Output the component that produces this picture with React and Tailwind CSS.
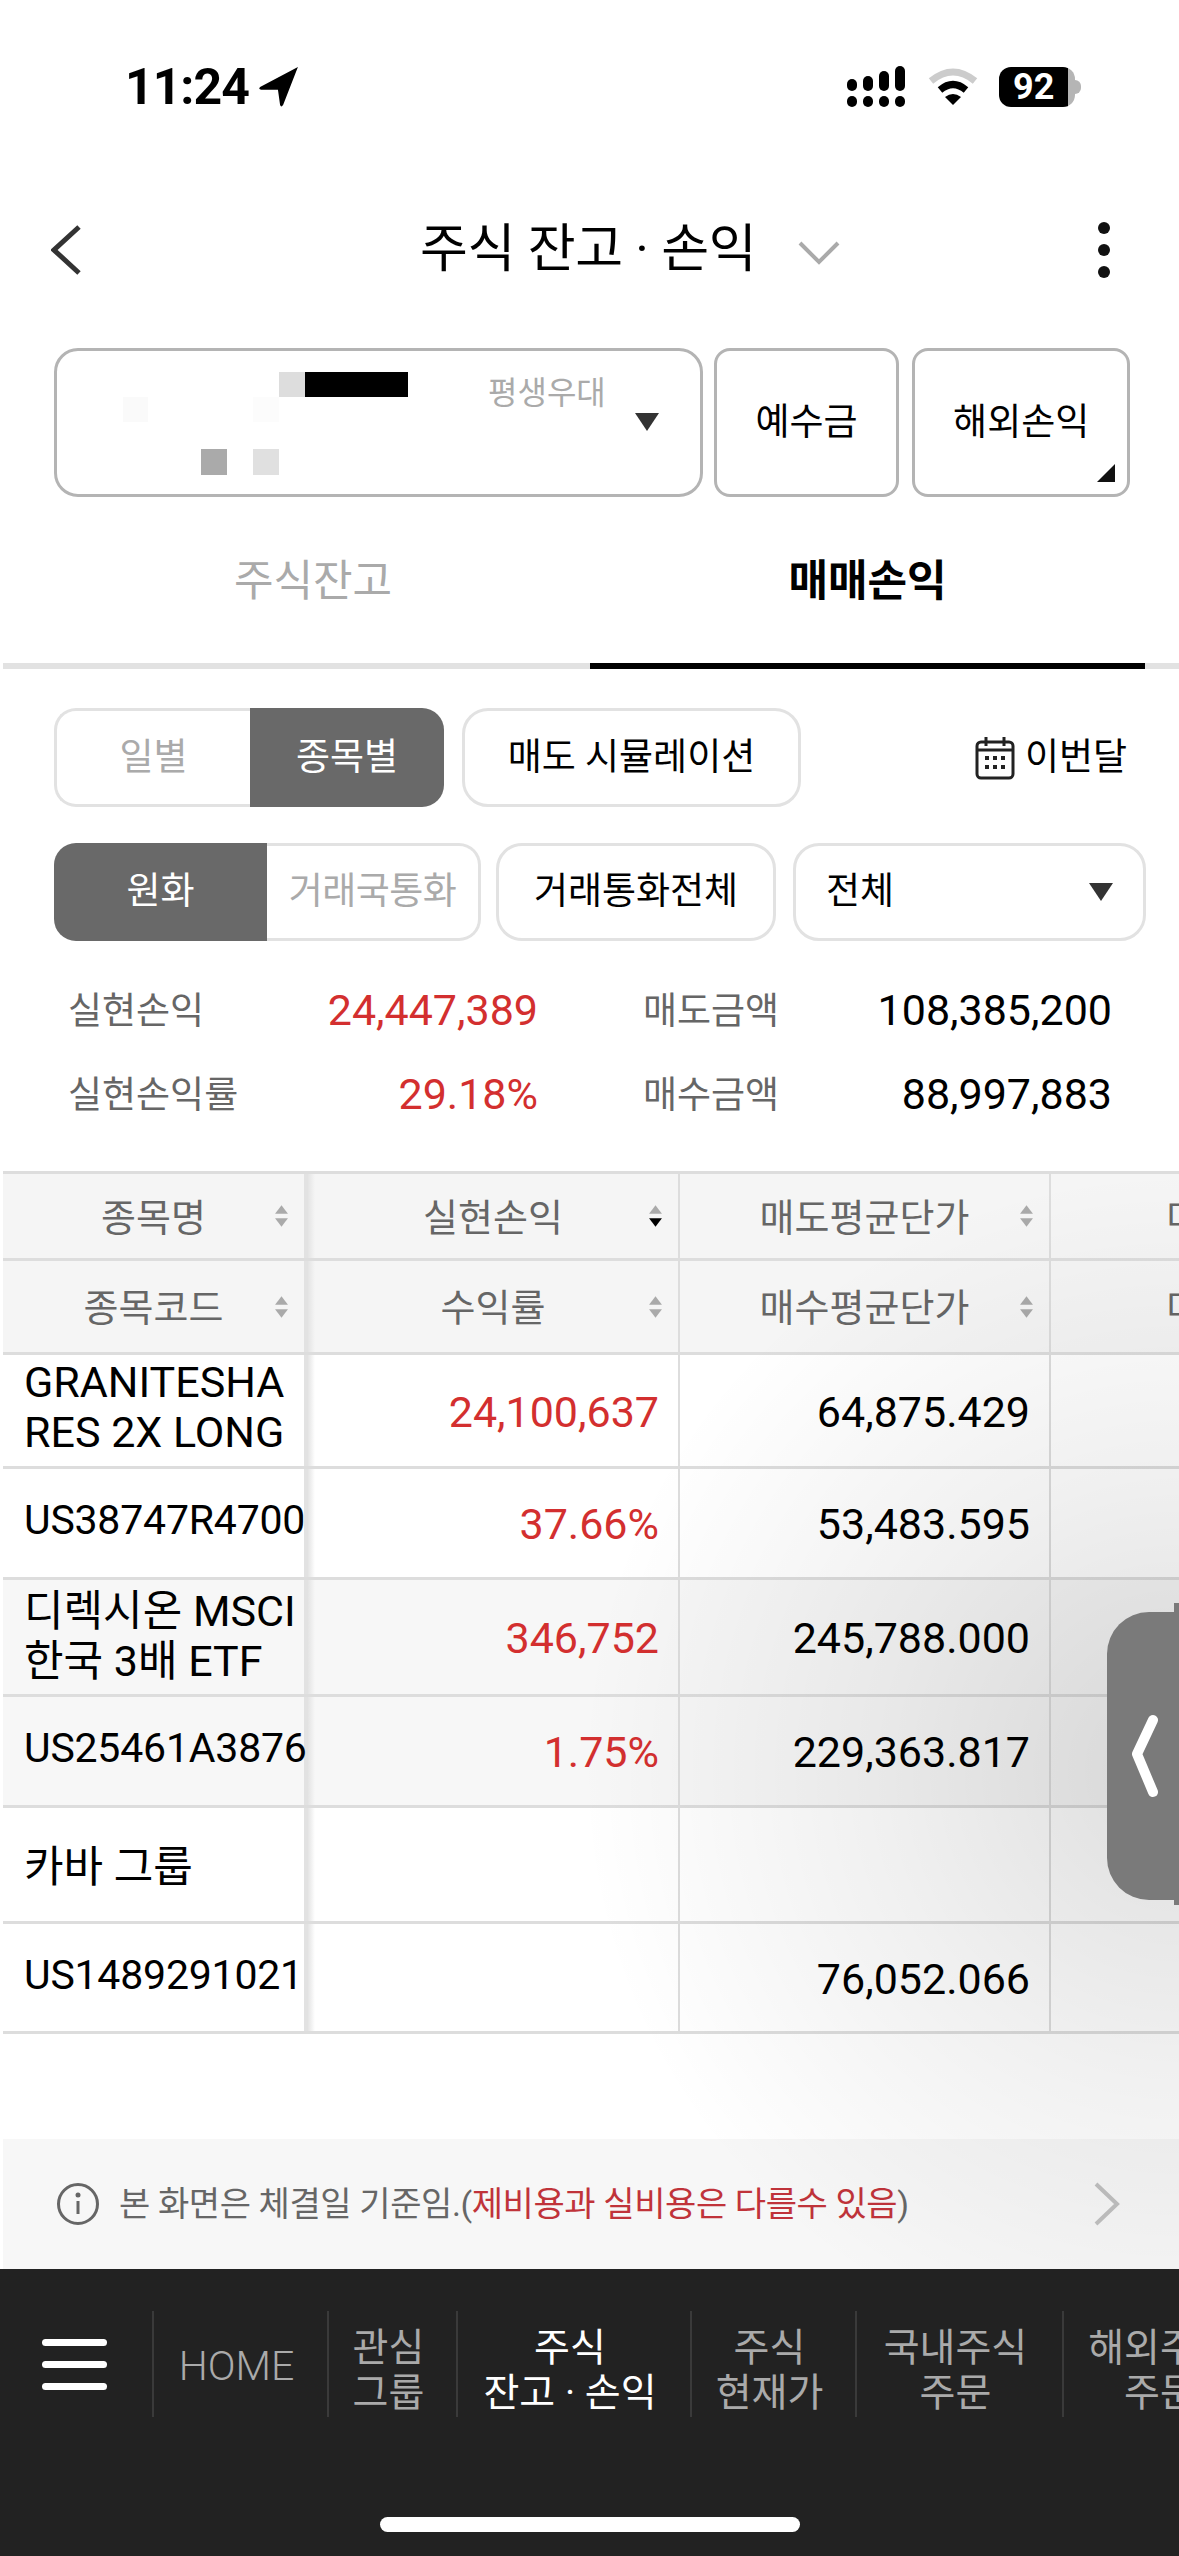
import React from 'react';

const SortIcon = ({ active }) => (
  <svg width="15" height="22" viewBox="0 0 14 20" className="absolute right-[15px] top-1/2 -translate-y-1/2">
    <path d="M7 0 L13 8 L1 8 Z" fill="#aaaaaa" />
    <path d="M7 20 L13 12 L1 12 Z" fill={active ? '#000000' : '#aaaaaa'} />
  </svg>
);

const StatusBar = () => (
  <div className="h-[190px] pt-[64px] pl-[125px] pr-[98px] flex items-start justify-between">
    <div className="flex items-center gap-[9px] h-[46px]">
      <span className="text-[50px] leading-[46px] font-bold text-black tracking-[-1px]">11:24</span>
      <svg width="42" height="42" viewBox="0 0 40 40">
        <path d="M38 1 L2 20 Q0 22 3 22.5 L19 22.5 L21 37 Q22 40 24 37 Z" fill="#000" />
      </svg>
    </div>
    <div className="flex items-center h-[46px] gap-[20px]">
      <svg width="60" height="44" viewBox="846 66 60 44">
        <rect x="846" y="80" width="10" height="12" rx="5" />
        <rect x="862" y="77" width="10" height="15" rx="5" />
        <rect x="878" y="72" width="10" height="20" rx="5" />
        <rect x="894" y="67" width="10" height="25" rx="5" />
        <rect x="846" y="97" width="10" height="11" rx="5" />
        <rect x="862" y="97" width="10" height="11" rx="5" />
        <rect x="878" y="97" width="10" height="11" rx="5" />
        <rect x="894" y="97" width="10" height="11" rx="5" />
      </svg>
      <svg width="52" height="40" viewBox="925 68 52 40">
        <path d="M929 82 Q951 64 973 82" fill="none" stroke="#cccccc" strokeWidth="7" />
        <path d="M938 91 Q951 80 964 91" fill="none" stroke="#000" strokeWidth="7" />
        <path d="M943 98 Q951 92 959 98 L951 106 Z" fill="#000" />
      </svg>
      <div className="flex items-center">
        <div className="w-[76px] h-[40px] rounded-[12px] bg-[linear-gradient(90deg,#000_69px,#b5b5b5_69px)] text-white text-[36px] font-bold leading-[40px] pl-[14px]">92</div>
        <div className="w-[6px] h-[14px] bg-[#b5b5b5] rounded-r-[6px]"></div>
      </div>
    </div>
  </div>
);

const Header = () => (
  <div className="h-[120px] flex items-center pl-[51px] pr-[68px]">
    <svg width="30" height="50" viewBox="0 0 30 50">
      <path d="M28 2 L3 25 L28 48" fill="none" stroke="#333333" strokeWidth="5" />
    </svg>
    <div className="ml-[339px] text-[52px] leading-[60px] text-black whitespace-nowrap tracking-[-0.3px]">주식 잔고 · 손익</div>
    <svg width="42" height="24" viewBox="0 0 42 24" className="ml-[42px] mt-[6px]">
      <path d="M2 2 L21 21 L40 2" fill="none" stroke="#aaaaaa" strokeWidth="4" />
    </svg>
    <div className="ml-auto mr-[1px] flex flex-col gap-[10px]">
      <div className="w-[12px] h-[12px] rounded-full bg-[#111]"></div>
      <div className="w-[12px] h-[12px] rounded-full bg-[#111]"></div>
      <div className="w-[12px] h-[12px] rounded-full bg-[#111]"></div>
    </div>
  </div>
);

const AccountRow = () => (
  <div className="mt-[38px] ml-[54px] mr-[49px] h-[149px] flex">
    <div className="relative w-[650px] h-full rounded-[24px] border-[3px] border-[#b4b4b4]">
      <div className="absolute left-[222px] top-[21px] w-[26px] h-[25px] bg-[#dddddd]"></div>
      <div className="absolute left-[248px] top-[21px] w-[103px] h-[25px] bg-black"></div>
      <div className="absolute left-[66px] top-[46px] w-[25px] h-[25px] bg-[#fafafa]"></div>
      <div className="absolute left-[196px] top-[46px] w-[26px] h-[25px] bg-[#fcfcfc]"></div>
      <div className="absolute left-[144px] top-[98px] w-[26px] h-[26px] bg-[#aaaaaa]"></div>
      <div className="absolute left-[196px] top-[98px] w-[26px] h-[26px] bg-[#e0e0e0]"></div>
      <div className="absolute left-[431px] top-[20px] text-[32px] leading-[44px] text-[#aaaaaa] whitespace-nowrap">평생우대</div>
      <svg width="24" height="18" viewBox="0 0 24 18" className="absolute left-[578px] top-[62px]">
        <path d="M0 0 L24 0 L12 18 Z" fill="#333333" />
      </svg>
    </div>
    <div className="ml-[11px] w-[186px] h-full rounded-[16px] border-[3px] border-[#b4b4b4] flex items-center justify-center text-[37px] text-black">예수금</div>
    <div className="relative ml-[13px] w-[218px] h-full rounded-[16px] border-[3px] border-[#b4b4b4] flex items-center justify-center text-[37px] text-black">
      해외손익
      <svg width="18" height="18" viewBox="0 0 18 18" className="absolute right-[12px] bottom-[12px]">
        <path d="M18 0 L18 18 L0 18 Z" fill="#111" />
      </svg>
    </div>
  </div>
);

const Tabs = () => (
  <div className="ml-[3px] h-[172px] flex flex-col">
    <div className="flex-1 flex">
      <div className="w-[587px] flex items-center justify-center pt-[3px] pl-[33px] text-[43px] text-[#aaaaaa]">주식잔고</div>
      <div className="w-[555px] flex items-center justify-center pt-[3px] text-[43px] font-bold text-black">매매손익</div>
    </div>
    <div className="h-[6px] flex bg-[#e2e2e2]">
      <div className="w-[587px]"></div>
      <div className="w-[555px] bg-black"></div>
    </div>
  </div>
);

const FilterRows = () => (
  <>
    <div className="mt-[39px] ml-[54px] h-[99px] flex items-stretch">
      <div className="w-[196px] rounded-l-[22px] border-[3px] border-r-0 border-[#e2e2e2] flex items-center justify-center text-[37px] text-[#aaaaaa]">일별</div>
      <div className="w-[194px] rounded-r-[22px] bg-[#696969] flex items-center justify-center text-[37px] text-white">종목별</div>
      <div className="ml-[18px] w-[339px] rounded-[26px] border-[3px] border-[#e2e2e2] flex items-center justify-center text-[37px] text-black whitespace-nowrap">매도 시뮬레이션</div>
      <div className="ml-[174px] flex items-center gap-[10px]">
        <svg width="40" height="44" viewBox="0 0 40 44">
          <rect x="2" y="6" width="36" height="36" rx="4" fill="none" stroke="#222" strokeWidth="3" />
          <path d="M11 1 V10 M29 1 V10 M2 14 H38" stroke="#222" strokeWidth="3" />
          <path d="M10 22 h4 M18 22 h4 M26 22 h4 M10 31 h4 M18 31 h4 M26 31 h4" stroke="#222" strokeWidth="4" />
        </svg>
        <span className="text-[37px] text-black whitespace-nowrap">이번달</span>
      </div>
    </div>
    <div className="mt-[36px] ml-[54px] h-[98px] flex items-stretch">
      <div className="w-[213px] rounded-l-[22px] bg-[#696969] flex items-center justify-center text-[37px] text-white">원화</div>
      <div className="w-[214px] rounded-r-[22px] border-[3px] border-l-0 border-[#e2e2e2] flex items-center justify-center text-[37px] tracking-[-0.5px] text-[#aaaaaa] whitespace-nowrap">거래국통화</div>
      <div className="ml-[15px] w-[280px] rounded-[26px] border-[3px] border-[#e2e2e2] flex items-center justify-center text-[37px] text-black whitespace-nowrap">거래통화전체</div>
      <div className="ml-[17px] w-[353px] rounded-[26px] border-[3px] border-[#e2e2e2] flex items-center justify-between pl-[30px] pr-[30px] text-[37px] text-black">
        전체
        <svg width="24" height="18" viewBox="0 0 24 18">
          <path d="M0 0 L24 0 L12 18 Z" fill="#333333" />
        </svg>
      </div>
    </div>
  </>
);

const Summary = () => (
  <div className="mt-[27px] pl-[68px] pr-[67px] grid grid-cols-[470px_105px_1fr] text-[37px]">
    {[
      ['실현손익', '24,447,389', '매도금액', '108,385,200'],
      ['실현손익률', '29.18%', '매수금액', '88,997,883'],
    ].map((r) => (
      <React.Fragment key={r[0]}>
        <div className="h-[84px] flex items-center justify-between text-[#666666] whitespace-nowrap">
          <span className="pt-[4px]">{r[0]}</span>
          <span className="text-[43px] text-[#d32f2f]">{r[1]}</span>
        </div>
        <div></div>
        <div className="h-[84px] flex items-center justify-between text-[#666666] whitespace-nowrap">
          <span className="pt-[4px]">{r[2]}</span>
          <span className="text-[43px] text-black">{r[3]}</span>
        </div>
      </React.Fragment>
    ))}
  </div>
);

const HeaderRow = ({ labels, active, height }) => (
  <div className={`flex bg-[#f5f5f5] border-b-[3px] border-[#dddddd] text-[38px] text-[#666666] ${height}`}>
    <div className="relative w-[305px] shrink-0 border-r-[4px] border-[#e2e2e2] flex items-center justify-center pt-[4px]">
      {labels[0]}
      <SortIcon />
    </div>
    <div className="relative w-[372px] shrink-0 border-r-[2px] border-[#dddddd] flex items-center justify-center pt-[4px] bg-[linear-gradient(90deg,#e4e4e4,transparent_7px)]">
      {labels[1]}
      <SortIcon active={active} />
    </div>
    <div className="relative w-[371px] shrink-0 border-r-[2px] border-[#dddddd] flex items-center justify-center pt-[4px]">
      {labels[2]}
      <SortIcon />
    </div>
    <div className="relative w-[371px] shrink-0 flex items-center justify-center pt-[4px] whitespace-nowrap">{labels[3]}</div>
  </div>
);

const BodyRow = ({ name, profit, price, height, bg, wrap, nudge }) => (
  <div className={`flex border-b-[3px] border-[#dddddd] text-[43px] text-black ${height} ${bg}`}>
    <div className="relative z-10 w-[305px] shrink-0 border-r-[4px] border-[#e2e2e2] flex items-center pl-[21px]">
      <div className={wrap ? `w-[282px] text-[43px] leading-[50px] break-all ${nudge}` : 'whitespace-nowrap text-[41px] tracking-[-0.2px] pb-[4px]'}>{name}</div>
    </div>
    <div className="w-[372px] shrink-0 border-r-[2px] border-[#dddddd] flex items-center justify-end pr-[19px] pt-[3px] text-[#d32f2f] bg-[linear-gradient(90deg,#e4e4e4,transparent_7px)]">{profit}</div>
    <div className="w-[371px] shrink-0 border-r-[2px] border-[#dddddd] flex items-center justify-end pr-[19px] pt-[3px]">{price}</div>
    <div className="w-[371px] shrink-0"></div>
  </div>
);

const StockTable = () => (
  <div className="mt-[35px] ml-[3px] border-t-[3px] border-[#dddddd] overflow-hidden">
    <HeaderRow labels={['종목명', '실현손익', '매도평균단가', '매도금액']} active height="h-[87px]" />
    <HeaderRow labels={['종목코드', '수익률', '매수평균단가', '매수금액']} height="h-[94px]" />
    <BodyRow name="GRANITESHARES 2X LONG" profit="24,100,637" price="64,875.429" height="h-[114px]" bg="bg-white" wrap nudge="pb-[8px]" />
    <BodyRow name="US38747R4700" profit="37.66%" price="53,483.595" height="h-[111px]" bg="bg-white" />
    <BodyRow name="디렉시온 MSCI 한국 3배 ETF" profit="346,752" price="245,788.000" height="h-[117px]" bg="bg-[#f7f7f7]" wrap nudge="pb-[2px]" />
    <BodyRow name="US25461A3876" profit="1.75%" price="229,363.817" height="h-[111px]" bg="bg-[#f7f7f7]" />
    <BodyRow name="카바 그룹" profit="" price="" height="h-[116px]" bg="bg-white" wrap nudge="pt-[4px]" />
    <BodyRow name="US1489291021" profit="" price="76,052.066" height="h-[110px]" bg="bg-white" />
  </div>
);

const Notice = () => (
  <div className="mt-[105px] ml-[3px] h-[130px] bg-[#f7f7f7] flex items-center pl-[53px] pr-[58px]">
    <svg width="44" height="44" viewBox="0 0 44 44">
      <circle cx="22" cy="22" r="19.5" fill="none" stroke="#666666" strokeWidth="3" />
      <circle cx="22" cy="13" r="2.5" fill="#666666" />
      <path d="M22 19 V32" stroke="#666666" strokeWidth="3" />
    </svg>
    <div className="ml-[19px] text-[34px] tracking-[-0.4px] text-[#666666] whitespace-nowrap">
      본 화면은 체결일 기준임.(<span className="text-[#c0333a]">제비용과 실비용은 다를수 있음</span>)
    </div>
    <svg width="28" height="44" viewBox="0 0 28 44" className="ml-auto">
      <path d="M3 2 L24 22 L3 42" fill="none" stroke="#c0c0c0" strokeWidth="4" />
    </svg>
  </div>
);

const navItems = [
  { w: 'w-[175px]', lines: ['HOME'], home: true },
  { w: 'w-[129px]', lines: ['관심', '그룹'] },
  { w: 'w-[234px]', lines: ['주식', '잔고 · 손익'], active: true },
  { w: 'w-[165px]', lines: ['주식', '현재가'] },
  { w: 'w-[207px]', lines: ['국내주식', '주문'] },
  { w: 'w-[202px]', lines: ['해외주식', '주문'] },
];

const BottomNav = () => (
  <div className="flex-1 bg-[#222222] relative overflow-hidden">
    <div className="mt-[42px] h-[106px] flex">
      <div className="w-[152px] shrink-0 flex flex-col justify-center gap-[15px] pl-[42px]">
        <div className="w-[65px] h-[7px] rounded-full bg-white"></div>
        <div className="w-[65px] h-[7px] rounded-full bg-white"></div>
        <div className="w-[65px] h-[7px] rounded-full bg-white"></div>
      </div>
      {navItems.map((item) => (
        <div
          key={item.lines.join()}
          className={`${item.w} shrink-0 border-l-2 border-[#3a3a3a] pr-[8px] flex flex-col items-center justify-center leading-[45px] whitespace-nowrap ${item.active ? 'text-white' : 'text-[#aaaaaa]'} ${item.home ? 'text-[41px] font-light pt-[4px]' : 'text-[39px] pt-[14px]'}`}
        >
          {item.lines.map((l) => (
            <div key={l}>{l}</div>
          ))}
        </div>
      ))}
    </div>
    <div className="absolute left-[380px] bottom-[24px] w-[420px] h-[15px] rounded-full bg-white"></div>
  </div>
);

const App = () => {
  return (
    <div className="relative w-[1179px] h-[2556px] overflow-hidden bg-white flex flex-col font-['Roboto','Noto_Sans_CJK_KR',sans-serif]">
      <StatusBar />
      <Header />
      <AccountRow />
      <Tabs />
      <FilterRows />
      <Summary />
      <StockTable />
      <Notice />
      <BottomNav />

      {/* shade around the floating handle */}
      <div className="absolute left-[479px] top-[1160px] w-[700px] h-[1109px] pointer-events-none bg-[radial-gradient(ellipse_600px_600px_at_100%_55%,rgba(0,0,0,0.13),rgba(0,0,0,0.06)_50%,transparent_100%)]"></div>

      <div className="absolute right-0 top-[1603px] w-[5px] h-[302px] bg-[#7a7a7a]"></div>
      <div className="absolute right-0 top-[1612px] w-[72px] h-[288px] rounded-l-[42px] bg-[#7a7a7a] flex items-center pl-[24px]">
        <svg width="28" height="84" viewBox="0 0 28 84">
          <path d="M22 6 L6 40 L22 78" fill="none" stroke="#ffffff" strokeWidth="10" strokeLinecap="round" strokeLinejoin="round" />
        </svg>
      </div>
    </div>
  );
};

export default App;
